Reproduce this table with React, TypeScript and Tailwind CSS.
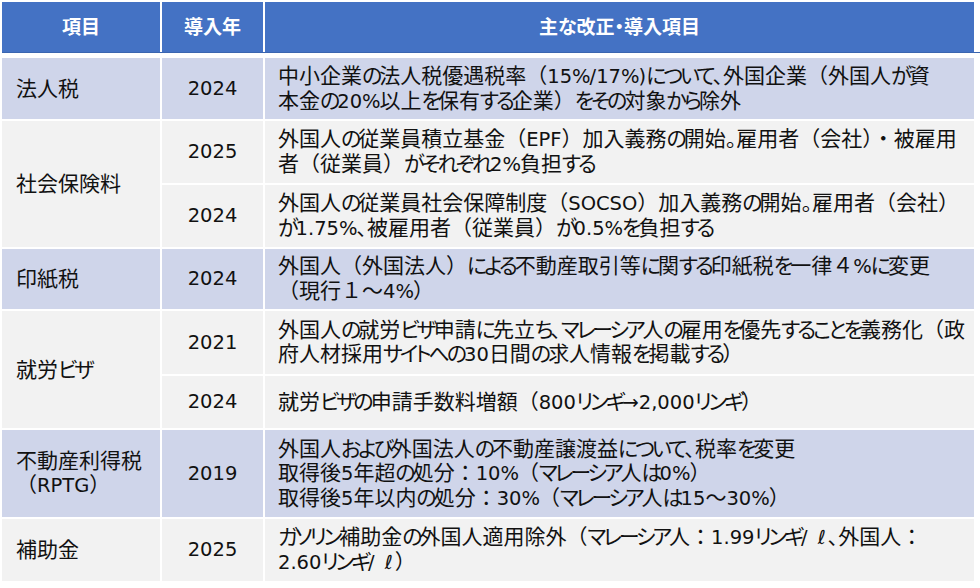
const font = "font-['DejaVu_Sans','Noto_Sans_CJK_JP',sans-serif]";

type Row = { item?: string[]; span?: number; year: string; lines: string[]; band: 'a' | 'b' };

const rows: Row[] = [
  {
    item: ['法人税'],
    year: '2024',
    band: 'a',
    lines: ['中小企業の法人税優遇税率（15%/17%)について、外国企業（外国人が資', '本金の20%以上を保有する企業）をその対象から除外'],
  },
  {
    item: ['社会保険料'],
    span: 2,
    year: '2025',
    band: 'b',
    lines: ['外国人の従業員積立基金（EPF）加入義務の開始。雇用者（会社）・被雇用', '者（従業員）がそれぞれ2%負担する'],
  },
  {
    year: '2024',
    band: 'b',
    lines: ['外国人の従業員社会保障制度（SOCSO）加入義務の開始。雇用者（会社）', 'が1.75%、被雇用者（従業員）が0.5%を負担する'],
  },
  {
    item: ['印紙税'],
    year: '2024',
    band: 'a',
    lines: ['外国人（外国法人）による不動産取引等に関する印紙税を一律４%に変更', '（現行１～4%）'],
  },
  {
    item: ['就労ビザ'],
    span: 2,
    year: '2021',
    band: 'b',
    lines: ['外国人の就労ビザ申請に先立ち、マレーシア人の雇用を優先することを義務化（政', '府人材採用サイトへの30日間の求人情報を掲載する）'],
  },
  {
    year: '2024',
    band: 'b',
    lines: ['就労ビザの申請手数料増額（800リンギ→2,000リンギ）'],
  },
  {
    item: ['不動産利得税', '（RPTG）'],
    year: '2019',
    band: 'a',
    lines: [
      '外国人および外国法人の不動産譲渡益について、税率を変更',
      '取得後5年超の処分：10%（マレーシア人は0%）',
      '取得後5年以内の処分：30%（マレーシア人は15～30%）',
    ],
  },
  {
    item: ['補助金'],
    year: '2025',
    band: 'b',
    lines: ['ガソリン補助金の外国人適用除外（マレーシア人：1.99リンギ/ ℓ、外国人：', '2.60リンギ/ ℓ）'],
  },
];

// the source font has narrow kana and slightly smaller latin than its kanji
type Kind = 'kana' | 'punct' | 'latin' | 'pct' | 'liter' | 'full';
const kindOf = (ch: string): Kind => {
  if (ch === '、' || ch === '。') return 'punct';
  if (ch === '%') return 'pct';
  if (ch === 'ℓ') return 'liter';
  if (/[\u3040-\u30fa\u30fc-\u30ff]/.test(ch)) return 'kana';
  if (/[\u0020-\u007e\u2192]/.test(ch)) return 'latin';
  return 'full';
};
const kindClass: Record<Kind, string> = {
  kana: "[font-feature-settings:'palt'] tracking-[-3px]",
  punct: "[font-feature-settings:'palt']",
  latin: 'text-[19.5px]',
  pct: 'text-[19.5px] tracking-[-1px]',
  liter: 'text-[19.5px] ml-[4px] mr-[2px]',
  full: '',
};

function Line({ text }: { text: string }) {
  const parts: { t: string; k: Kind }[] = [];
  for (const ch of text) {
    const k = kindOf(ch);
    const last = parts[parts.length - 1];
    if (last && last.k === k) last.t += ch;
    else parts.push({ t: ch, k });
  }
  return (
    <div>
      {parts.map((p, i) => (
        <span key={i} className={kindClass[p.k]}>
          {p.t}
        </span>
      ))}
    </div>
  );
}

export default function App() {
  return (
    <div className={`w-[980px] h-[588px] bg-white pl-[2px] pt-[2px] text-[#111] ${font}`}>
      {/* header */}
      <div className="grid grid-cols-[158px_101px_709px] gap-x-[2px] border-b border-[#3a65b0]">
        <div className="h-[50px] bg-[#4472c4] flex items-center justify-center text-white font-bold text-[19px]">項目</div>
        <div className="h-[50px] bg-[#4472c4] flex items-center justify-center text-white font-bold text-[19px]">導入年</div>
        <div className="h-[50px] bg-[#4472c4] flex items-center justify-center text-white font-bold text-[19px] [font-feature-settings:'palt']">
          主な改正・導入項目
        </div>
      </div>
      <div className="grid grid-cols-[158px_101px_709px] grid-rows-[61px_62px_62px_60px_63px_52px_87px_62px] gap-[2px] mt-[5px] text-[21px] leading-[24px]">
        {rows.map((r, i) => {
          const bg = r.band === 'a' ? 'bg-[#cfd5ea]' : 'bg-[#f2f2f2]';
          return [
            r.item ? (
              <div
                key={`i${i}`}
                className={`${bg} flex flex-col justify-center pl-[14px] whitespace-nowrap ${r.span === 2 ? 'row-span-2' : ''}`}
              >
                {r.item.map((t) => (
                  <Line key={t} text={t} />
                ))}
              </div>
            ) : null,
            <div key={`y${i}`} className={`${bg} flex items-center justify-center text-[19.5px]`}>
              {r.year}
            </div>,
            <div key={`t${i}`} className={`${bg} flex flex-col justify-center pl-[13px] whitespace-nowrap`}>
              {r.lines.map((t) => (
                <Line key={t} text={t} />
              ))}
            </div>,
          ];
        })}
      </div>
    </div>
  );
}
